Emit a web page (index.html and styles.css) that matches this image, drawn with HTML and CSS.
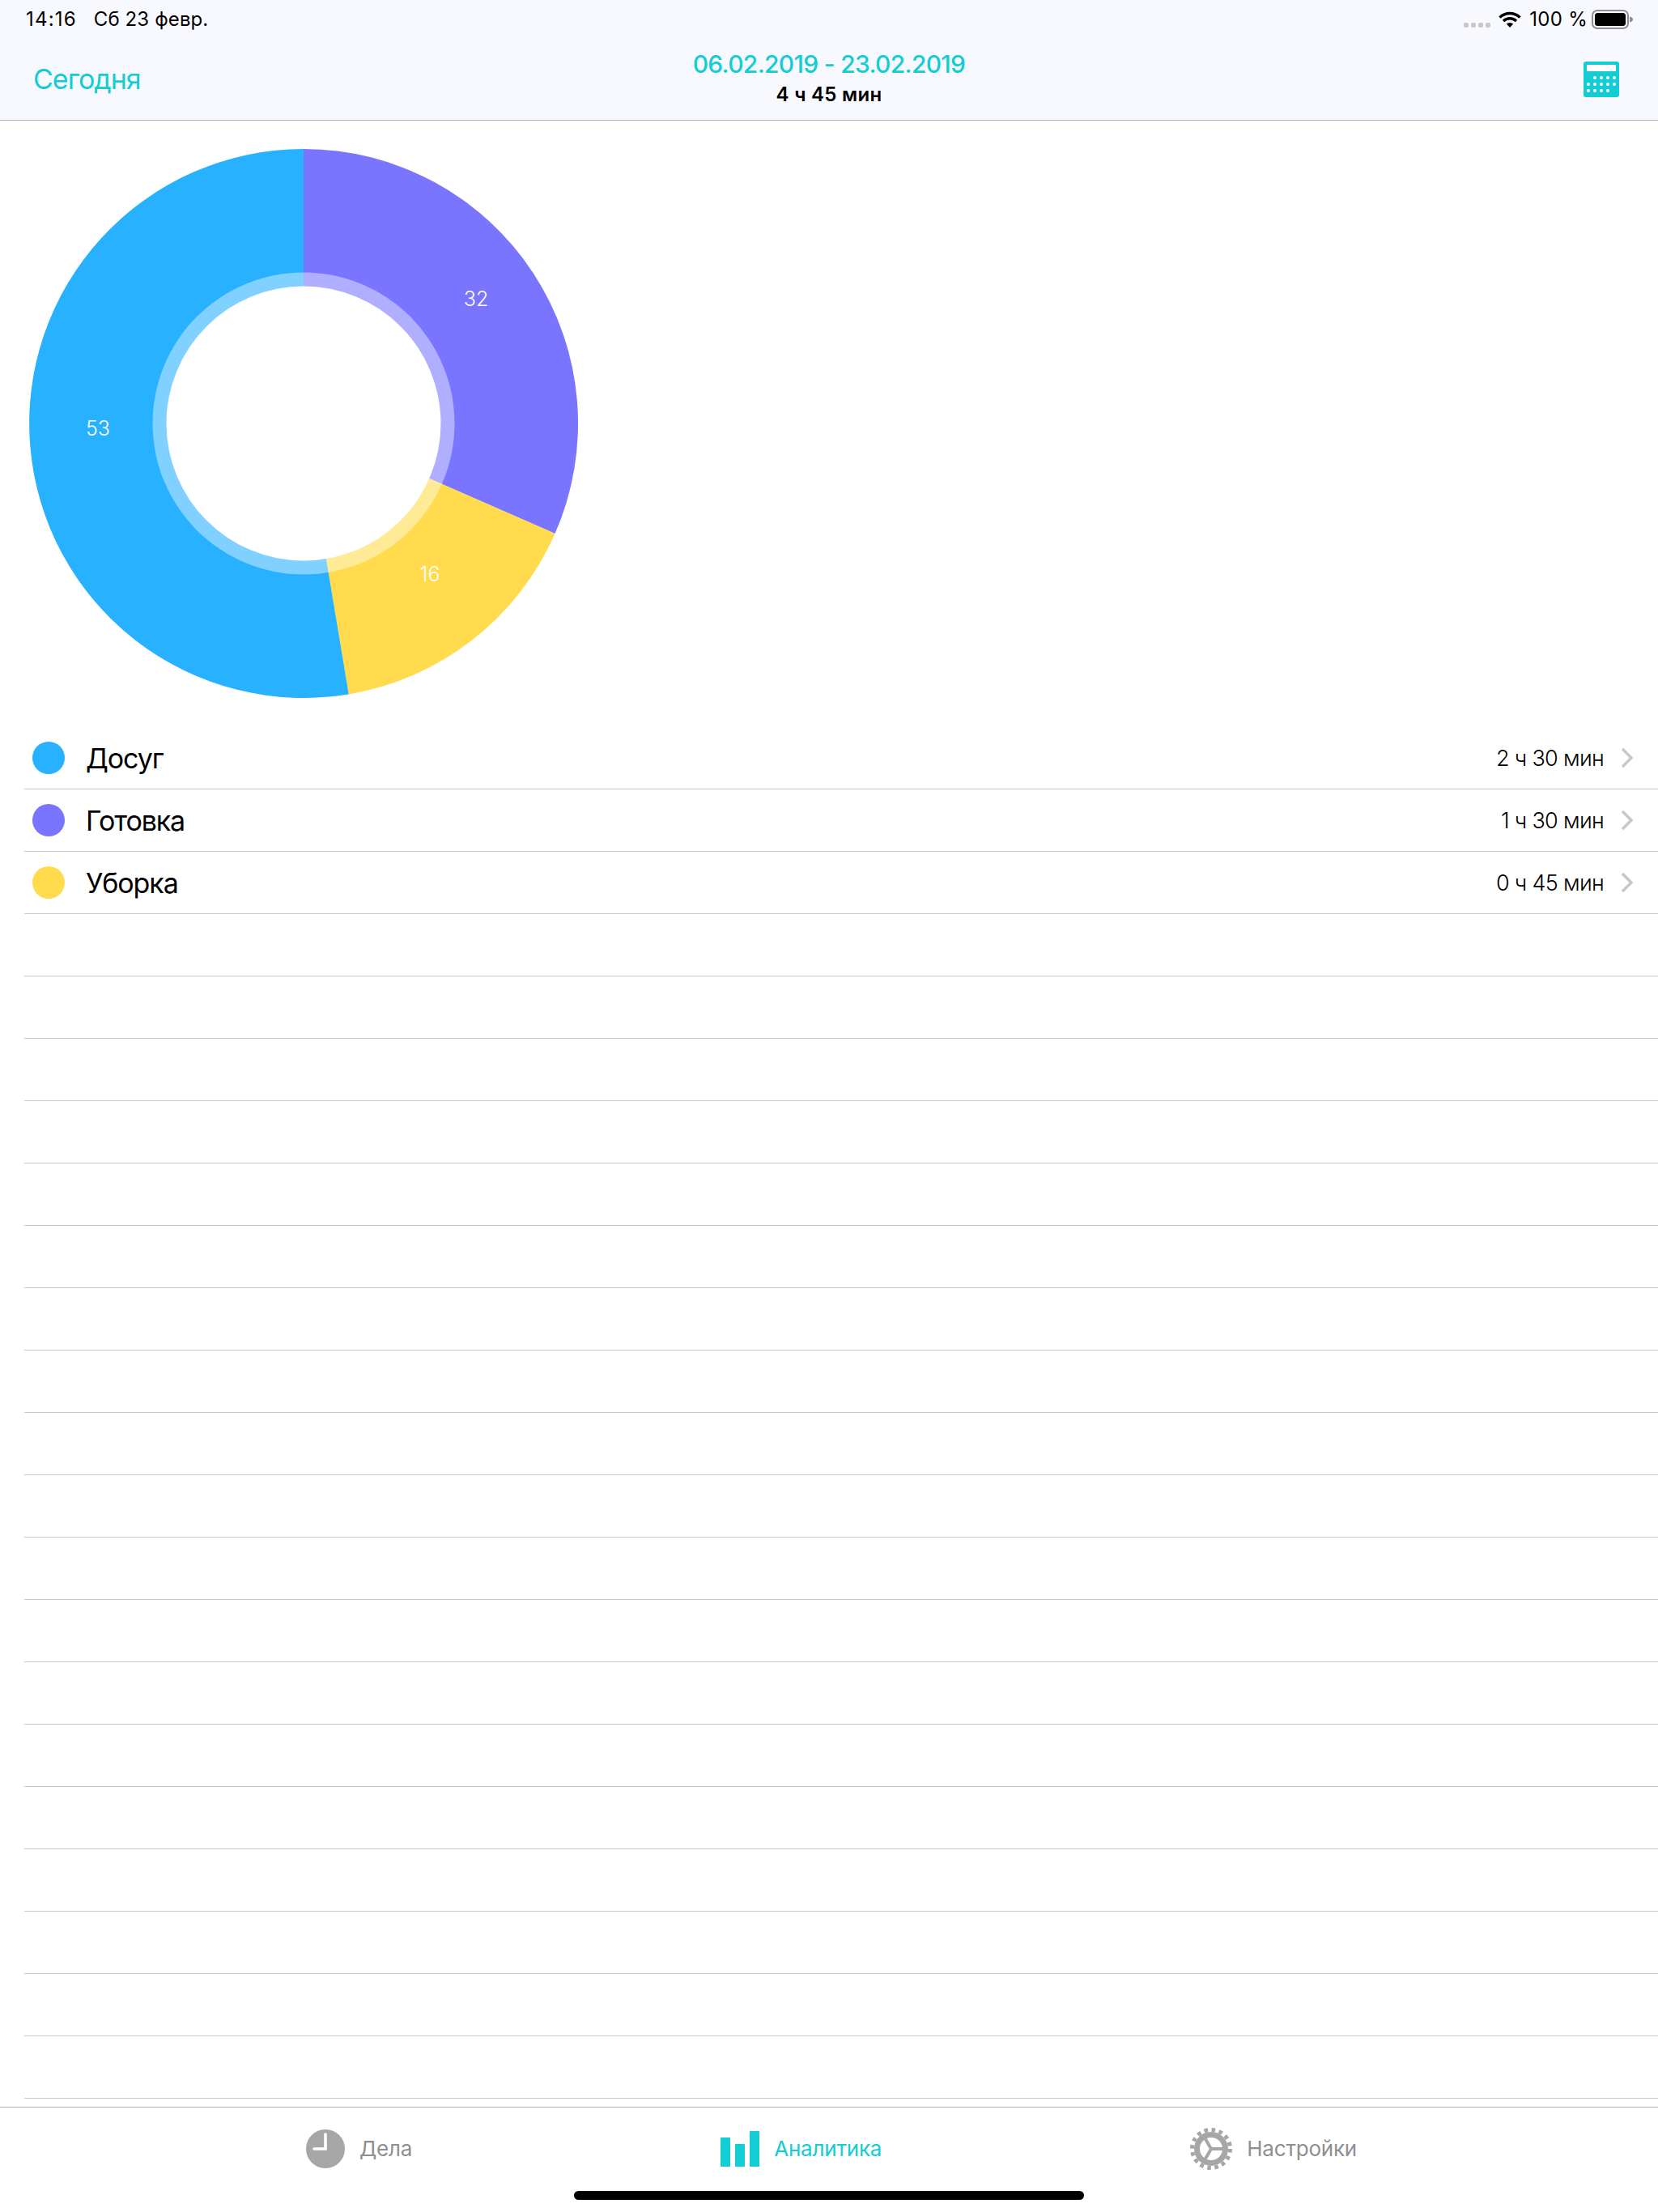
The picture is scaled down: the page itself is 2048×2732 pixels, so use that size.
FILE: index.html
```html
<!DOCTYPE html>
<html lang="ru">
<head>
  <meta charset="UTF-8">
  <title>Аналитика</title>
  <link rel="stylesheet" href="styles.css">
</head>

<body>

  <div class="app">

    <header class="top">
      <!-- Status bar -->
      <div class="status">
        <div class="status-left">
          <span class="status-time">14:16</span>
          <span>Сб 23 февр.</span>
        </div>
        <div class="status-right">
          <div class="signal"><i></i><i></i><i></i><i></i></div>
          <svg class="wifi" width="28" height="20" viewBox="0 0 28 20">
            <path d="M1.5 7.6A18 18 0 0 1 26.500 7.600M6 12A11.500 11.500 0 0 1 22 12" fill="none" stroke="#000" stroke-width="3.4"/>
            <path d="M9.800 15.600A6 6 0 0 1 18.200 15.600L14 20Z" fill="#000"/>
          </svg>
          <span class="battery-text">100 %</span>
          <svg class="battery" width="52" height="24" viewBox="0 0 52 24">
            <rect x="1" y="1" width="44" height="22" rx="6" fill="none" stroke="#8e8e93" stroke-width="2"/>
            <rect x="4" y="4" width="38" height="16" rx="3.500" fill="#000"/>
            <path d="M47 8.500c2.500 .5 4 1.500 4 3.500s-1.500 3-4 3.500z" fill="#8e8e93"/>
          </svg>
        </div>
      </div>

      <!-- Nav bar -->
      <div class="nav">
        <a class="nav-today">Сегодня</a>
        <div class="nav-title">
          <div class="nav-dates">06.02.2019 - 23.02.2019</div>
          <div class="nav-total">4 ч 45 мин</div>
        </div>
        <svg class="nav-calc" width="44" height="44" viewBox="0 0 44 44">
          <rect width="44" height="44" rx="3" fill="#13ccd4"/>
          <rect x="4" y="4" width="36" height="8" fill="#fff"/>
          <g fill="#fff">
            <circle cx="14" cy="20" r="2"/><circle cx="22" cy="20" r="2"/><circle cx="30" cy="20" r="2"/><circle cx="38" cy="20" r="2"/>
            <circle cx="6" cy="28" r="2"/><circle cx="14" cy="28" r="2"/><circle cx="22" cy="28" r="2"/><circle cx="30" cy="28" r="2"/><circle cx="38" cy="28" r="2"/>
            <circle cx="6" cy="36" r="2"/><circle cx="14" cy="36" r="2"/><circle cx="22" cy="36" r="2"/><circle cx="30" cy="36" r="2"/>
          </g>
        </svg>
      </div>
    </header>

    <main class="content">
      <!-- Donut chart -->
      <section class="chart">
        <svg width="678" height="678" viewBox="0 0 678 678">
          <path d="M339 339L339 0A339 339 0 0 1 649.500 475.100Z" fill="#7a75ff"/>
          <path d="M339 339L649.500 475.100A339 339 0 0 1 394.800 673.400Z" fill="#ffdb4d"/>
          <path d="M339 339L394.800 673.400A339 339 0 1 1 339 0Z" fill="#28b1ff"/>
          <circle cx="339" cy="339" r="186.500" fill="#fff" fill-opacity="0.41"/>
          <circle cx="339" cy="339" r="169.500" fill="#fff"/>
          <text class="chart-label" x="552" y="194">32</text>
          <text class="chart-label" x="85" y="354">53</text>
          <text class="chart-label" x="495" y="534">16</text>
        </svg>
      </section>

      <!-- Category list -->
      <div class="list">
        <div class="row">
          <span class="dot dot-blue"></span>
          <span class="row-name">Досуг</span>
          <span class="row-time">2 ч 30 мин</span>
          <svg class="chevron" width="16" height="26" viewBox="0 0 16 26"><path d="M2 2l11 11L2 24" fill="none" stroke="#c7c7cc" stroke-width="3.500"/></svg>
        </div>
        <div class="row">
          <span class="dot dot-purple"></span>
          <span class="row-name">Готовка</span>
          <span class="row-time">1 ч 30 мин</span>
          <svg class="chevron" width="16" height="26" viewBox="0 0 16 26"><path d="M2 2l11 11L2 24" fill="none" stroke="#c7c7cc" stroke-width="3.500"/></svg>
        </div>
        <div class="row">
          <span class="dot dot-yellow"></span>
          <span class="row-name">Уборка</span>
          <span class="row-time">0 ч 45 мин</span>
          <svg class="chevron" width="16" height="26" viewBox="0 0 16 26"><path d="M2 2l11 11L2 24" fill="none" stroke="#c7c7cc" stroke-width="3.500"/></svg>
        </div>
        <div class="row"></div>
        <div class="row"></div>
        <div class="row"></div>
        <div class="row"></div>
        <div class="row"></div>
        <div class="row"></div>
        <div class="row"></div>
        <div class="row"></div>
        <div class="row"></div>
        <div class="row"></div>
        <div class="row"></div>
        <div class="row"></div>
        <div class="row"></div>
        <div class="row"></div>
        <div class="row"></div>
        <div class="row"></div>
        <div class="row"></div>
        <div class="row"></div>
        <div class="row"></div>
      </div>
    </main>

    <!-- Tab bar -->
    <nav class="tabs">
      <div class="tab">
        <svg width="48" height="48" viewBox="0 0 48 48">
          <circle cx="24" cy="24" r="24" fill="#a6a6a6"/>
          <path d="M24 6V24H10" fill="none" stroke="#fff" stroke-width="3.600" stroke-linecap="round" stroke-linejoin="miter"/>
        </svg>
        <span>Дела</span>
      </div>
      <div class="tab tab-active">
        <svg width="48" height="44" viewBox="0 0 48 44">
          <rect y="8" width="12" height="36" rx="1" fill="#13ccd4"/>
          <rect x="18" y="16" width="12" height="28" rx="1" fill="#13ccd4"/>
          <rect x="36" width="12" height="44" rx="1" fill="#13ccd4"/>
        </svg>
        <span>Аналитика</span>
      </div>
      <div class="tab">
        <svg width="52" height="52" viewBox="0 0 52 52">
          <circle cx="26" cy="26" r="23.500" fill="none" stroke="#a6a6a6" stroke-width="5" stroke-dasharray="4.610 4.610"/>
          <circle cx="26" cy="26" r="17.500" fill="none" stroke="#a6a6a6" stroke-width="7"/>
          <path d="M26 26H44M26 26L17 10.500M26 26L17 41.500" fill="none" stroke="#a6a6a6" stroke-width="4"/>
        </svg>
        <span>Настройки</span>
      </div>
      <div class="home-bar"></div>
    </nav>

  </div>

</body>
</html>
```

FILE: styles.css
```css
body {
  margin: 0;
  background: #fff;
  font-family: Inter, "Noto Sans", sans-serif;
  color: #000;
}

.app {
  display: flex;
  flex-direction: column;
  height: 2732px;
  overflow: hidden;
}

/* header */

.top {
  flex: none;
  height: 148px;
  background: #f8f9ff;
  border-bottom: 1px solid #b2b2b2;
}

.status {
  display: flex;
  justify-content: space-between;
  align-items: center;
  height: 47px;
  padding: 0 30px 0 32px;
  font-size: 24px;
}

.status-left {
  display: flex;
  gap: 21px;
  letter-spacing: 0.1px;
}

.status-time {
  letter-spacing: 1.2px;
}

.status-right {
  display: flex;
  align-items: center;
}

.signal {
  display: flex;
  gap: 3px;
  margin: 14px 10px 0 0;
}

.signal i {
  width: 6px;
  height: 6px;
  border-radius: 2px;
  background: #c8c8c8;
}

.wifi {
  margin-right: 10px;
}

.battery-text {
  margin-right: 5px;
  letter-spacing: 0.3px;
}

.nav {
  display: grid;
  grid-template-columns: 1fr auto 1fr;
  align-items: center;
  height: 101px;
  padding: 0 48px;
}

.nav-today {
  margin-left: -7px;
  font-size: 34px;
  letter-spacing: -1px;
  color: #13ccd4;
}

.nav-title {
  text-align: center;
}

.nav-dates {
  font-size: 30px;
  line-height: 38px;
  font-weight: 500;
  letter-spacing: -0.7px;
  color: #13ccd4;
}

.nav-total {
  font-size: 24px;
  line-height: 38px;
  font-weight: 600;
  letter-spacing: 0.3px;
}

.nav-calc {
  justify-self: end;
}

/* chart */

.content {
  flex: 1;
  min-height: 0;
  overflow: hidden;
}

.chart {
  height: 749px;
  box-sizing: border-box;
  padding: 35px 36px 0;
}

.chart svg {
  display: block;
}

.chart-label {
  font-size: 25px;
  font-weight: 300;
  fill: #fff;
  text-anchor: middle;
}

/* list */

.list {
  margin-left: 30px;
}

.row {
  display: flex;
  align-items: center;
  box-sizing: border-box;
  height: 77px;
  padding: 0 30px 0 10px;
  border-bottom: 1px solid #c8c7cc;
}

.dot {
  width: 40px;
  height: 40px;
  border-radius: 50%;
  margin-right: 26px;
}

.dot-blue { background: #28b1ff; }
.dot-purple { background: #7a75ff; }
.dot-yellow { background: #ffdb4d; }

.row-name {
  flex: 1;
  font-size: 34px;
  letter-spacing: -1.1px;
}

.row-time {
  font-size: 27px;
  font-weight: 300;
  letter-spacing: -0.7px;
  margin-right: 21px;
}

/* tab bar */

.tabs {
  position: relative;
  flex: none;
  display: flex;
  justify-content: center;
  gap: 381px;
  height: 130px;
  box-sizing: border-box;
  padding: 0 0 28px 6px;
  border-top: 1px solid #b2b2b2;
}

.tab {
  display: flex;
  align-items: center;
  gap: 18px;
  font-size: 26px;
  letter-spacing: -0.2px;
  color: #8e8e93;
}

.tab-active {
  color: #13ccd4;
}

.home-bar {
  position: absolute;
  left: 709px;
  bottom: 15px;
  width: 630px;
  height: 11px;
  border-radius: 6px;
  background: #000;
}
```
